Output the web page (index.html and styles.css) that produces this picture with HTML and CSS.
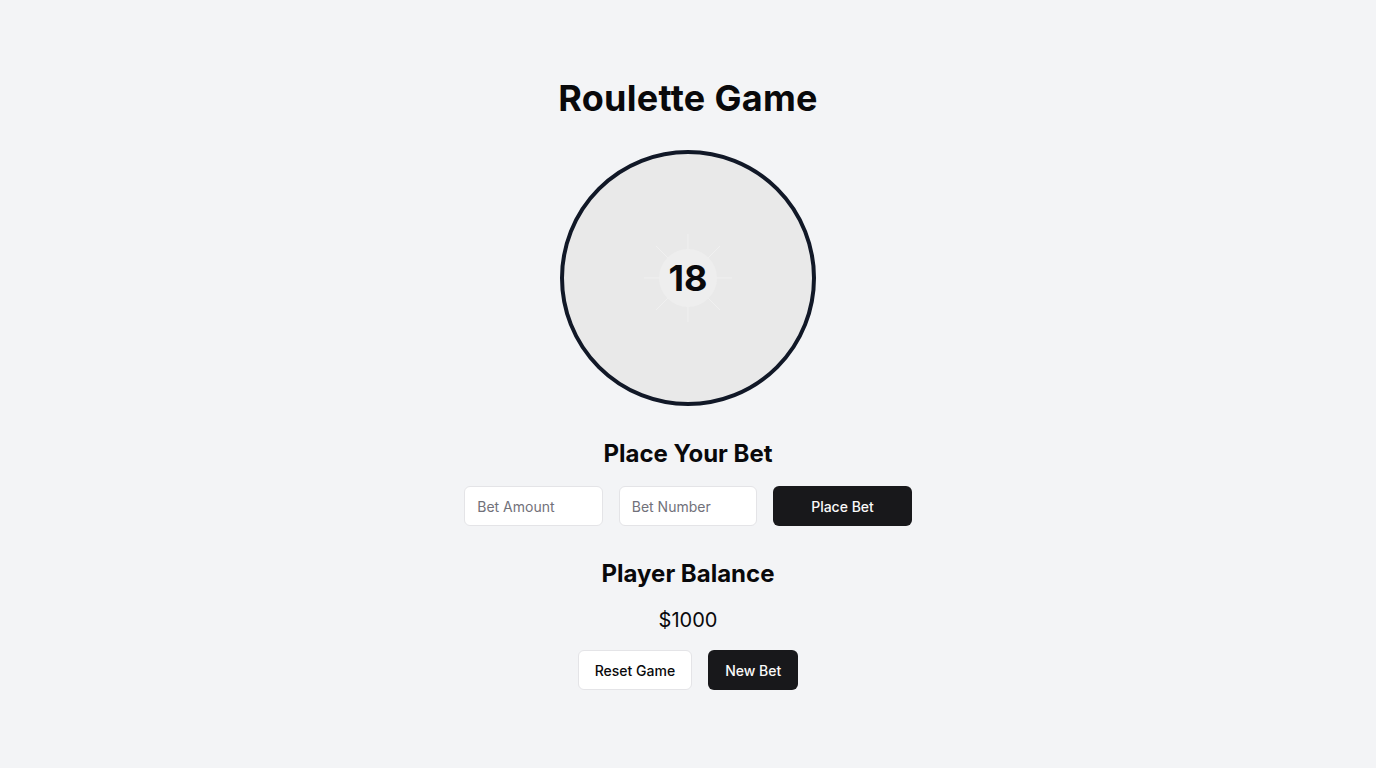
FILE: index.html
```html
<!DOCTYPE html>
<html lang="en">
<head>
<meta charset="utf-8">
<title>Roulette Game</title>
<link rel="stylesheet" href="styles.css">
</head>
<body>
<main class="page">
  <h1 class="title">Roulette Game</h1>
  <div class="wheel">
    <svg class="rays" width="100" height="100" viewBox="0 0 100 100" aria-hidden="true">
      <g stroke="#f1f1f1" stroke-width="0.8">
        <line x1="50" y1="6" x2="50" y2="94"/>
        <line x1="6" y1="50" x2="94" y2="50"/>
        <line x1="18" y1="18" x2="82" y2="82"/>
        <line x1="82" y1="18" x2="18" y2="82"/>
      </g>
      <circle cx="50" cy="50" r="29" fill="#eeeeee"/>
    </svg>
    <span class="number">18</span>
  </div>
  <h2 class="heading">Place Your Bet</h2>
  <div class="bet-row">
    <input class="field" type="text" placeholder="Bet Amount">
    <input class="field" type="text" placeholder="Bet Number">
    <button class="btn btn-dark btn-wide">Place Bet</button>
  </div>
  <h2 class="heading">Player Balance</h2>
  <p class="balance">$1000</p>
  <div class="actions">
    <button class="btn btn-light">Reset Game</button>
    <button class="btn btn-dark">New Bet</button>
  </div>
</main>
</body>
</html>
```
FILE: styles.css
```css
* { box-sizing: border-box; }
html, body { margin: 0; padding: 0; }
body {
  background: #f3f4f6;
  font-family: Inter, "Noto Sans", sans-serif;
  color: #09090b;
}
.page {
  min-height: 100vh;
  display: flex;
  flex-direction: column;
  align-items: center;
  justify-content: center;
}
.title {
  margin: 0 0 32px;
  font-size: 36px;
  line-height: 40px;
  font-weight: 700;
  letter-spacing: 0.3px;
}
.wheel {
  position: relative;
  width: 256px;
  height: 256px;
  border: 4px solid #111827;
  border-radius: 50%;
  background: #e9e9e9;
  display: flex;
  align-items: center;
  justify-content: center;
  margin-bottom: 32px;
}
.rays {
  position: absolute;
  left: 50%;
  top: 50%;
  transform: translate(-50%, -50%);
}
.number {
  position: relative;
  font-size: 36px;
  line-height: 40px;
  font-weight: 700;
}
.heading {
  margin: 0 0 16px;
  font-size: 24px;
  line-height: 32px;
  font-weight: 700;
}
.bet-row {
  display: flex;
  gap: 16px;
  margin-bottom: 32px;
}
.field {
  width: 138.5px;
  height: 40px;
  border: 1px solid #e4e4e7;
  border-radius: 6px;
  background: #fff;
  padding: 0 12px;
  font-family: inherit;
  font-size: 14px;
  color: #09090b;
}
.field::placeholder { color: #71717a; }
.btn {
  height: 40px;
  border-radius: 6px;
  padding: 0 16px;
  font-family: inherit;
  font-size: 14px;
  font-weight: 500;
  border: 1px solid transparent;
}
.btn-wide { width: 138.5px; }
.btn-dark { background: #18181b; color: #fafafa; }
.btn-light { background: #fff; color: #09090b; border-color: #e4e4e7; }
.balance {
  margin: 0 0 16px;
  font-size: 20px;
  line-height: 28px;
}
.actions {
  display: flex;
  gap: 16px;
}
```
